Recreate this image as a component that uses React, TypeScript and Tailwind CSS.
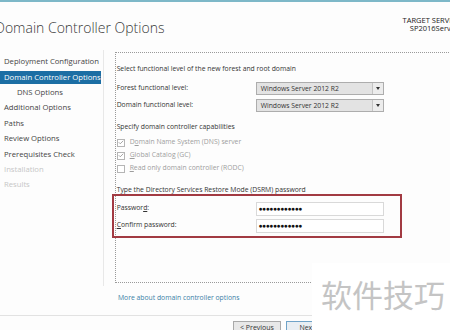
import { Check } from 'lucide-react'

const STEPS = [
  { label: 'Deployment Configuration', state: 'done' },
  { label: 'Domain Controller Options', state: 'active' },
  { label: 'DNS Options', state: 'sub' },
  { label: 'Additional Options', state: 'done' },
  { label: 'Paths', state: 'done' },
  { label: 'Review Options', state: 'done' },
  { label: 'Prerequisites Check', state: 'done' },
  { label: 'Installation', state: 'off' },
  { label: 'Results', state: 'off' },
] as const

function Dropdown({ value }: { value: string }) {
  return (
    <div className="flex h-[13px] w-[128px] border border-[#adadad] bg-[#e3e3e3]">
      <div className="flex-1 pl-[4px] leading-[11px] text-[#333]">{value}</div>
      <div className="flex w-[11px] items-center justify-center border-l border-[#c4c4c4] bg-[#ececec]">
        <span className="block h-0 w-0 border-x-[2px] border-t-[3px] border-x-transparent border-t-[#333]" />
      </div>
    </div>
  )
}

function Box({ checked }: { checked: boolean }) {
  return (
    <span className="flex h-[8px] w-[8px] items-center justify-center border border-[#b5b5b5] bg-white">
      {checked && <Check size={7} strokeWidth={3} className="text-[#8a8a8a]" />}
    </span>
  )
}

function PasswordBox() {
  return (
    <div className="h-[14px] w-[128px] border border-[#d9d9d9] bg-white pl-[2px] text-[6.5px] font-bold leading-[12px] tracking-[-0.3px] text-[#111]">
      ●●●●●●●●●●●●
    </div>
  )
}

export default function App() {
  return (
    <div className="relative h-[330px] w-[450px] overflow-hidden bg-[#fdfdfd] font-['Open_Sans',sans-serif] text-[6.8px] text-[#333]">
      <div className="h-[2px] bg-[#7db8c8]" />

      {/* Header */}
      <div className="flex h-[48px] justify-between">
        <h1 className="-ml-[5px] pt-[17px] text-[14px] font-light leading-[18px] text-[#3a3a3a]">
          Domain Controller Options
        </h1>
        <div className="-mr-[8px] pt-[13.5px] text-right text-[7.5px] leading-[8.5px] text-[#222]">
          <div>TARGET SERVER</div>
          <div>SP2016Server</div>
        </div>
      </div>

      {/* Body */}
      <div className="flex h-[236px]">
        <nav className="flex w-[105px] flex-col gap-[2.4px] border-r border-[#e8e8e8] pt-[5.5px] text-[7.7px]">
          {STEPS.map((s) => (
            <div
              key={s.label}
              className={`flex h-[13px] items-center whitespace-nowrap ${
                s.state === 'active'
                  ? 'mr-[2px] bg-[#1c6ea4] pl-[4px] text-white'
                  : s.state === 'sub'
                    ? 'pl-[17px] text-[#444]'
                    : s.state === 'off'
                      ? 'pl-[4px] text-[#c6c6c6]'
                      : 'pl-[4px] text-[#444]'
              }`}
            >
              {s.label}
            </div>
          ))}
        </nav>

        <div className="pl-[11px] pt-[2px]">
          <div className="h-[231px] w-[400px] border-y border-l border-dotted border-[#9a9a9a] pl-[1px] pt-[10px]">
            <div className="leading-[11px]">Select functional level of the new forest and root domain</div>

            <div className="mt-[7.5px] flex flex-col gap-[4px]">
              <div className="flex items-center">
                <span className="w-[139px]">Forest functional level:</span>
                <Dropdown value="Windows Server 2012 R2" />
              </div>
              <div className="flex items-center">
                <span className="w-[139px]">Domain functional level:</span>
                <Dropdown value="Windows Server 2012 R2" />
              </div>
            </div>

            <div className="mt-[9.5px] leading-[11px]">Specify domain controller capabilities</div>

            <div className="mt-[4px] flex flex-col text-[#9d9d9d]">
              <div className="flex h-[13px] items-center gap-[5px]">
                <Box checked />
                <span>
                  D<span className="underline">o</span>main Name System (DNS) server
                </span>
              </div>
              <div className="flex h-[13px] items-center gap-[5px]">
                <Box checked />
                <span>
                  <span className="underline">G</span>lobal Catalog (GC)
                </span>
              </div>
              <div className="flex h-[13px] items-center gap-[5px]">
                <Box checked={false} />
                <span>
                  <span className="underline">R</span>ead only domain controller (RODC)
                </span>
              </div>
            </div>

            <div className="mt-[9px] leading-[11px]">Type the Directory Services Restore Mode (DSRM) password</div>

            <div className="relative mt-[6.5px] flex flex-col gap-[3px]">
              <div className="flex items-center">
                <span className="w-[139px]">
                  Passwor<span className="underline">d</span>:
                </span>
                <PasswordBox />
              </div>
              <div className="flex items-center">
                <span className="w-[139px]">
                  <span className="underline">C</span>onfirm password:
                </span>
                <PasswordBox />
              </div>
              <div className="pointer-events-none absolute -left-[5px] -top-[8px] h-[44px] w-[290px] border-2 border-[#a23a42]" />
            </div>
          </div>
        </div>
      </div>

      {/* Footer */}
      <div className="pl-[118px] pt-[7px] leading-[10px] text-[#3b7fa6]">More about domain controller options</div>
      <div className="mt-[12px] border-t border-[#e2e2e2]" />
      <div className="flex gap-[5px] pl-[233px] pt-[5px]">
        <button className="h-[14px] w-[48px] border border-[#a9a9a9] bg-[#e8e8e8] text-[7px] leading-[12px] text-[#333]">
          &lt; Previous
        </button>
        <button className="h-[14px] w-[48px] border border-[#6fa3c8] bg-[#e8eef3] text-[7px] leading-[12px] text-[#333]">
          Next &gt;
        </button>
      </div>

      {/* Watermark */}
      <div className="absolute bottom-0 left-[312px] right-0 top-[263px] bg-white pl-[9px] pt-[14px]">
        <span className="font-['Noto_Sans_CJK_SC',sans-serif] text-[31px] leading-[34px] text-[#c4c4c4]">软件技巧</span>
      </div>
    </div>
  )
}
